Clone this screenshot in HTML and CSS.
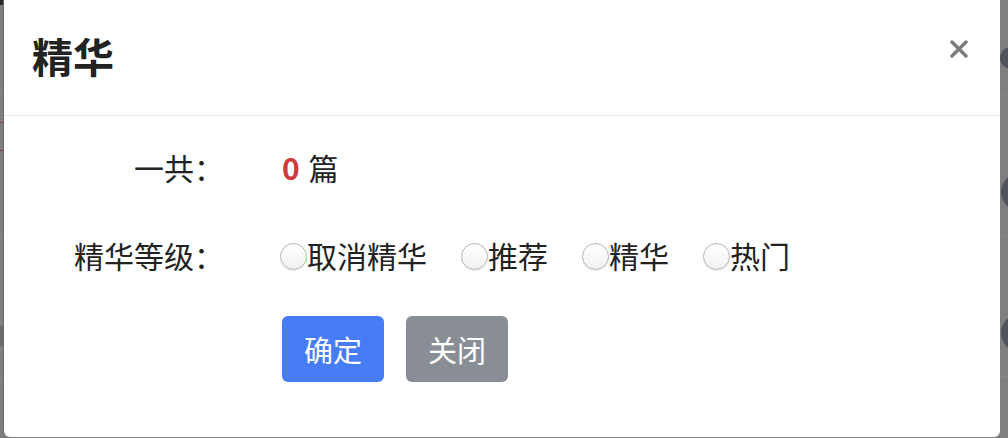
FILE: index.html
```html
<!DOCTYPE html>
<html lang="zh-CN">
<head>
    <meta charset="UTF-8">
    <meta name="viewport" content="width=device-width, initial-scale=1.0">
    <title>精华</title>
    <link rel="stylesheet" href="styles.css">
</head>
<body>

<div class="screen">
    <div class="page-edge page-left">
        <div class="edge-row first"><span class="mark dark"></span></div>
        <div class="edge-row"><span class="mark red"></span></div>
        <div class="edge-row"><span class="mark grey"></span></div>
    </div>

    <div class="modal">
        <div class="modal-header">
            <h4 class="modal-title">精华</h4>
            <button class="close" type="button" aria-label="关闭">
                <svg width="18" height="18" viewBox="0 0 18 18">
                    <path d="M2 2 L16 16 M16 2 L2 16" stroke="#7b7b7b" stroke-width="3.4" stroke-linecap="round"/>
                </svg>
            </button>
        </div>

        <div class="modal-body">
            <div class="form-row">
                <span class="form-label">一共：</span>
                <span class="form-value"><b class="count">0</b> 篇</span>
            </div>

            <div class="form-row">
                <span class="form-label">精华等级：</span>
                <div class="form-value radios">
                    <label class="radio"><input type="radio" name="level" value="0">取消精华</label>
                    <label class="radio"><input type="radio" name="level" value="1">推荐</label>
                    <label class="radio"><input type="radio" name="level" value="2">精华</label>
                    <label class="radio"><input type="radio" name="level" value="3">热门</label>
                </div>
            </div>

            <div class="form-row actions">
                <span></span>
                <div class="form-value buttons">
                    <button class="btn btn-primary" type="button">确定</button>
                    <button class="btn btn-secondary" type="button">关闭</button>
                </div>
            </div>
        </div>
    </div>

    <div class="page-edge page-right">
        <div class="edge-row first"><span class="avatar small"></span></div>
        <div class="edge-row"><span class="avatar"></span></div>
        <div class="edge-row"><span class="avatar"></span></div>
    </div>
</div>

</body>
</html>
```

FILE: styles.css
```css
body {
    margin: 0;
    font-family: "Noto Sans CJK SC", "Noto Sans", sans-serif;
    color: #222;
}
.screen {
    display: flex;
    width: 1008px;
    height: 438px;
    overflow: hidden;
    background: #7f7f7f;
}

/* the page behind the backdrop */
.page-edge {
    display: flex;
    flex-direction: column;
    overflow: hidden;
}
.page-left {
    width: 4px;
}
.page-right {
    width: 8px;
}
.edge-row {
    flex: none;
    height: 140px;
    border-bottom: 1px solid #858585;
    display: flex;
    flex-direction: column;
}
.edge-row.first {
    height: 94px;
}
.mark {
    display: block;
    width: 4px;
}
.mark.dark {
    height: 5px;
    background: #2a2a2a;
}
.mark.red {
    height: 29px;
    margin-top: 27px;
    box-sizing: border-box;
    border: 1px solid #8c3b33;
    border-left: none;
}
.mark.grey {
    height: 20px;
    margin-top: 90px;
    background: #6b6b6b;
}
.avatar {
    display: block;
    width: 38px;
    height: 38px;
    margin: 78px 0 0 1px;
    border-radius: 50%;
    background: #50545d;
}
.avatar.small {
    width: 22px;
    height: 22px;
    margin: 47px 0 0 0;
}

/* modal */
.modal {
    flex: none;
    width: 996px;
    height: 437px;
    background: #fff;
    border-radius: 0 0 6px 6px;
    box-shadow: -1px 0 0 #6a6a6a;
}
.modal-header {
    height: 111px;
    padding: 0 32px 4px 28px;
    display: flex;
    align-items: center;
    justify-content: space-between;
    border-bottom: 1px solid #e6e6ea;
}
.modal-title {
    margin: 0;
    font-size: 41px;
    font-weight: 700;
    line-height: 1;
    color: #222;
}
.close {
    align-self: flex-start;
    margin-top: 40px;
    padding: 0;
    border: none;
    background: none;
    width: 18px;
    height: 18px;
    cursor: pointer;
}
.close svg {
    display: block;
}
.modal-body {
    padding: 31px 0 0;
}
.form-row {
    display: grid;
    grid-template-columns: 220px 1fr;
    column-gap: 56px;
    align-items: center;
    height: 40px;
    margin-bottom: 48px;
    font-size: 30px;
    line-height: 40px;
}
.form-row:nth-child(2) {
    margin-bottom: 41px;
}
.form-label {
    text-align: right;
    color: #222;
}
.count {
    color: #cf3b3d;
    font-weight: 700;
    margin: 0 2px 0 2px;
}
.radios {
    display: flex;
    align-items: center;
}
.radio {
    display: inline-flex;
    align-items: center;
    margin-right: 34px;
}
.radio input {
    appearance: none;
    -webkit-appearance: none;
    width: 27px;
    height: 27px;
    margin: 2px 0 0 0;
    border: 1px solid #b4b4b4;
    border-radius: 50%;
    background: linear-gradient(#ffffff, #f1f1f1);
    box-shadow: 0 1px 1px rgba(0,0,0,0.08);
}
.actions {
    height: 66px;
}
.buttons {
    display: flex;
    gap: 22px;
    padding-left: 2px;
}
.btn {
    width: 102px;
    height: 66px;
    border: none;
    border-radius: 6px;
    color: #fff;
    font-family: inherit;
    font-size: 29px;
    cursor: pointer;
}
.btn-primary {
    background: #477cf7;
}
.btn-secondary {
    background: #898e96;
}
```
